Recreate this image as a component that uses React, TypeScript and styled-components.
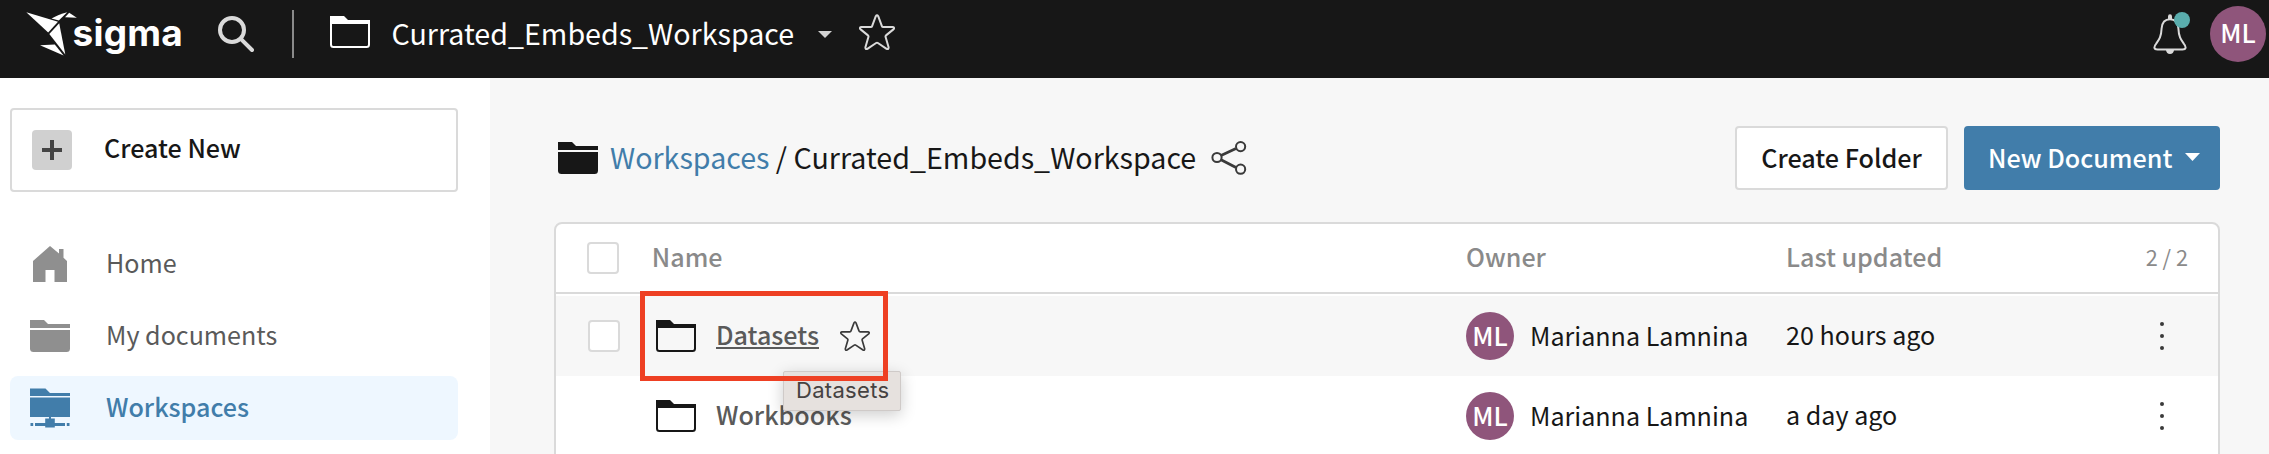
import React from 'react';
import styled, { createGlobalStyle } from 'styled-components';

const font = '"Noto Sans CJK SC", "Source Sans Pro", sans-serif';

const GlobalStyle = createGlobalStyle`
  * { box-sizing: border-box; }
  body { margin: 0; overflow: hidden; background: #fff; font-family: ${font}; color: #171717; }
  svg { display: block; flex: none; }
`;

const Page = styled.div`
  display: flex;
  flex-direction: column;
  height: 454px;
  overflow: hidden;
`;

/* ---------- top bar ---------- */

const TopBar = styled.header`
  flex: none;
  display: flex;
  align-items: center;
  height: 78px;
  padding: 0 3px 10px 26px;
  background: #171717;
  color: #fff;
`;

const Brand = styled.div`
  display: flex;
  align-items: center;
  width: 192px;
`;

const BrandName = styled.span`
  margin-left: -4.5px;
  padding-bottom: 3px;
  font: 650 37px/40px Inter, sans-serif;
  letter-spacing: 0.2px;
`;

const Divider = styled.div`
  width: 2px;
  height: 48px;
  margin: 0 36px 0 38px;
  background: #8a8a8a;
`;

const Raised = styled.div`
  padding-bottom: 4px;
`;

const WorkspaceTitle = styled.div`
  width: 426.5px;
  margin-left: 21.5px;
  padding-bottom: 3px;
  font-size: 28.65px;
  line-height: 40px;
  white-space: nowrap;
`;

const StarButton = styled(Raised)`
  margin-left: 27px;
`;

const BellButton = styled.div`
  position: relative;
  margin-left: auto;
`;

const BellDot = styled.span`
  position: absolute;
  top: -2px;
  right: -3px;
  width: 16px;
  height: 16px;
  border-radius: 50%;
  background: #5aadad;
`;

const Avatar = styled.div<{ $size: number }>`
  flex: none;
  display: flex;
  align-items: center;
  justify-content: center;
  width: ${p => p.$size}px;
  height: ${p => p.$size}px;
  padding-bottom: ${p => (p.$size > 50 ? 4 : 3)}px;
  border-radius: 50%;
  background: #8f557b;
  color: #fff;
  font-size: 25.6px;
  font-weight: 500;
  line-height: 36px;
`;

const AccountAvatar = styled(Avatar)`
  margin-left: 23px;
`;

/* ---------- sidebar ---------- */

const Body = styled.div`
  flex: 1;
  display: flex;
  min-height: 0;
`;

const Sidebar = styled.nav`
  flex: none;
  display: flex;
  flex-direction: column;
  gap: 8px;
  width: 490px;
  padding: 30px 32px 0 10px;
  background: #fff;
`;

const CreateNew = styled.div`
  display: flex;
  align-items: center;
  height: 84px;
  margin-bottom: 32px;
  padding-left: 20px;
  border: 2px solid #dadada;
  border-radius: 4px;
`;

const PlusTile = styled.div`
  display: flex;
  align-items: center;
  justify-content: center;
  width: 40px;
  height: 40px;
  border-radius: 4px;
  background: #d0d0d0;
`;

const CreateLabel = styled.span`
  margin-left: 32px;
  padding-bottom: 6px;
  font-size: 25.1px;
  font-weight: 500;
  line-height: 36px;
`;

const NavItem = styled.div<{ $active?: boolean }>`
  display: flex;
  align-items: center;
  height: 64px;
  padding-left: 20px;
  border-radius: 8px;
  background: ${p => (p.$active ? '#eef7ff' : 'transparent')};
  color: ${p => (p.$active ? '#417daa' : '#5a5a5a')};
  font-weight: ${p => (p.$active ? 500 : 400)};
`;

const NavLabel = styled.span`
  margin-left: 36px;
  padding-bottom: 4px;
  font-size: 25.1px;
  line-height: 36px;
`;

/* ---------- main panel ---------- */

const Main = styled.main`
  flex: 1;
  display: flex;
  flex-direction: column;
  min-width: 0;
  padding: 48px 49px 0 64px;
  background: #f7f7f7;
`;

const Toolbar = styled.div`
  flex: none;
  display: flex;
  align-items: center;
  height: 64px;
  margin-bottom: 32px;
  padding-left: 4px;
`;

const Breadcrumb = styled.div`
  width: 600.5px;
  margin-left: 12px;
  padding-bottom: 3px;
  font-size: 28.65px;
  line-height: 40px;
  white-space: pre;
`;

const CrumbLink = styled.span`
  color: #417daa;
`;

const ToolbarActions = styled.div`
  display: flex;
  gap: 16px;
  margin-left: auto;
`;

const Button = styled.button<{ $primary?: boolean }>`
  display: flex;
  align-items: center;
  justify-content: ${p => (p.$primary ? 'flex-start' : 'center')};
  gap: 13px;
  width: ${p => (p.$primary ? 256 : 213)}px;
  height: 64px;
  padding: 0 0 2px ${p => (p.$primary ? 22 : 0)}px;
  border: 2px solid ${p => (p.$primary ? '#417daa' : '#dadada')};
  border-radius: 4px;
  background: ${p => (p.$primary ? '#417daa' : '#fff')};
  color: ${p => (p.$primary ? '#fff' : '#171717')};
  font: 500 25.15px/36px ${font};
  white-space: nowrap;
`;

const Table = styled.section`
  flex: none;
  height: 260px;
  border: 2px solid #dadada;
  border-radius: 8px 8px 0 0;
  background: #fff;
`;

const Row = styled.div<{ $hovered?: boolean }>`
  display: grid;
  grid-template-columns: 95px 815px 320px 1fr auto;
  align-items: center;
  height: 80px;
  background: ${p => (p.$hovered ? '#f7f7f7' : 'transparent')};
  font-size: 25.1px;
  line-height: 36px;
`;

const HeadRow = styled(Row)`
  height: 70px;
  margin-bottom: 2px;
  border-bottom: 2px solid #dadada;
  color: #8a8a8a;
  font-weight: 500;
`;

const CheckCell = styled.div<{ $inset: number }>`
  padding-left: ${p => p.$inset}px;
`;

const Checkbox = styled.div`
  width: 32px;
  height: 32px;
  border: 2px solid #dadada;
  border-radius: 4px;
  background: #fff;
`;

const TextCell = styled.div`
  padding-bottom: 4px;
`;

const NameHeading = styled(TextCell)`
  padding-left: 0.8px;
`;

const Count = styled(TextCell)`
  grid-column: 5;
  padding-right: 30px;
  padding-bottom: 2px;
  font-size: 21.7px;
  font-weight: 400;
`;

const NameCell = styled.div`
  position: relative;
  display: flex;
  align-items: center;
  height: 80px;
  padding-left: 5px;
`;

const ItemName = styled.span<{ $underlined?: boolean }>`
  margin: 0 21px 4px 20px;
  color: #5a5a5a;
  font-size: 25.1px;
  font-weight: 500;
  text-decoration: ${p => (p.$underlined ? 'underline' : 'none')};
  text-decoration-thickness: 2px;
  text-underline-offset: 2px;
  text-decoration-skip-ink: none;
`;

const Highlight = styled.div`
  position: absolute;
  z-index: 3;
  top: -4.6px;
  left: -11.3px;
  width: 248.5px;
  height: 90px;
  border: 5px solid #ee4023;
`;

const Tooltip = styled.div`
  position: absolute;
  z-index: 2;
  top: 75px;
  left: 132px;
  width: 118px;
  height: 40px;
  padding-left: 12px;
  border: 1px solid #cfcac8;
  border-radius: 2px;
  background: #e6e1de;
  box-shadow: 0 4px 16px rgba(0, 0, 0, 0.2);
  color: #454241;
  font: 400 22px/36px Inter, sans-serif;
  letter-spacing: 0.3px;
`;

const OwnerCell = styled.div`
  display: flex;
  align-items: center;
  gap: 16px;
`;

const OwnerName = styled.span`
  padding-bottom: 2px;
`;

const MenuCell = styled.div`
  grid-column: 5;
  padding-right: 54px;
`;

/* ---------- icons ---------- */

const Hummingbird = () => (
  <svg width="51" height="44" viewBox="26 12 51 44" fill="#fff">
    <path d="M26.3 12.3 58 21.7 48.2 32.4Z" />
    <path d="M51.5 18.4C56 16 61 13.4 67.2 12.2L58.8 20.6Z" />
    <path d="M69.2 12.8 76.8 17.8 65 17.2Z" />
    <path d="M59.2 23.2 65.3 54.4 49.3 34Z" />
    <path d="M40 45.2 54.8 44.6 63.6 55.4Z" />
  </svg>
);

const SearchIcon = () => (
  <svg width="36" height="37" viewBox="0 0 36 37" fill="none" stroke="#dadada" strokeWidth="4">
    <circle cx="14" cy="14" r="12" />
    <path d="M22.8 22.8 34 34" strokeLinecap="round" />
  </svg>
);

const FolderOutline = ({ color }: { color: string }) => (
  <svg width="40" height="32" viewBox="0 0 40 32">
    <path d="M0 0H14L18 4H40V8H0Z" fill={color} />
    <path d="M1 6V28.5Q1 31 3.5 31H36.5Q39 31 39 28.5V6" fill="none" stroke={color} strokeWidth="2" />
  </svg>
);

const FolderSolid = ({ color }: { color: string }) => (
  <svg width="40" height="32" viewBox="0 0 40 32" fill={color}>
    <path d="M0 0H14L18 4H40V8H0Z" />
    <path d="M0 10H40V28.5Q40 32 36.5 32H3.5Q0 32 0 28.5Z" />
  </svg>
);

const HomeIcon = () => (
  <svg width="34" height="36" viewBox="0 0 34 36" fill="#8f8f8f">
    <path d="M0 15 17 0 26 7.6V3H30.5V11.8L34 15V36H21.5V24H12.5V36H0Z" />
  </svg>
);

const SharedFolderIcon = () => (
  <svg width="40" height="40" viewBox="0 0 40 40" fill="#417daa">
    <path d="M0 .5H15.5L20 5H40V8H0ZM0 9.5H40V29H21V30.5H24.8V35H35V38H24.8V39.5H15.2V38H5V35H15.2V30.5H19V29H0ZM.5 35H3.2V38H.5ZM36.8 35H39.5V38H36.8Z" />
  </svg>
);

const StarIcon = ({ size, color, stroke }: { size: number; color: string; stroke: number }) => (
  <svg width={size} height={size} viewBox="0 0 36 36" fill="none" stroke={color} strokeWidth={stroke} strokeLinejoin="round">
    <path d="M16.8 2.2Q18 .2 19.2 2.2L22.9 12.1Q23.2 13 24.2 13L33.8 13.1Q36 13.6 34.4 15.4L27 21.4Q26.3 22 26.6 23L29.6 33.3Q29.7 35.7 27.6 34.8L18.9 29Q18 28.4 17.1 29L8.4 34.8Q6.3 35.7 6.4 33.3L9.4 23Q9.7 22 9 21.4L1.6 15.4Q0 13.6 2.2 13.1L11.8 13Q12.8 13 13.1 12.1Z" />
  </svg>
);

const Caret = ({ width, height, color }: { width: number; height: number; color: string }) => (
  <svg width={width} height={height} viewBox="0 0 14 7" preserveAspectRatio="none" fill={color}>
    <path d="M0 0H14L7 7Z" />
  </svg>
);

const BellIcon = () => (
  <svg width="34" height="40" viewBox="0 1 34 40">
    <path
      d="M17 6.3C11.5 6.3 9 10.5 8.6 15.5C8.2 24 6 26.6 3.2 30.6C.2 34.6 1.2 36.5 4.5 36.5H29.5C32.8 36.5 33.8 34.6 30.8 30.6C28 26.6 25.8 24 25.4 15.5C25 10.5 22.5 6.3 17 6.3Z"
      fill="none"
      stroke="#dadada"
      strokeWidth="2"
    />
    <path d="M15 6V3.5Q15 1.2 17 1.2T19 3.5V6ZM13 37H21Q20.5 41 17 41T13 37Z" fill="#dadada" />
  </svg>
);

const ShareIcon = () => (
  <svg width="36" height="34" viewBox="0 0 36 34" fill="none" stroke="#3a3a3a">
    <path d="M10 14.5 25 7.6M10 18.8 25 26.6" strokeWidth="2.8" />
    <circle cx="6" cy="16.5" r="4.6" strokeWidth="2" />
    <circle cx="29.6" cy="5.6" r="4.6" strokeWidth="2" />
    <circle cx="29.6" cy="28.2" r="4.6" strokeWidth="2" />
  </svg>
);

const PlusIcon = () => (
  <svg width="20" height="20" viewBox="0 0 20 20" fill="#444">
    <path d="M8 0H12V8H20V12H12V20H8V12H0V8H8Z" />
  </svg>
);

const KebabIcon = () => (
  <svg width="4" height="28" viewBox="0 0 4 28" fill="#3a3a3a">
    <circle cx="2" cy="2" r="2" />
    <circle cx="2" cy="14" r="2" />
    <circle cx="2" cy="26" r="2" />
  </svg>
);

const HomeSlot = styled.div`
  display: flex;
  justify-content: center;
  width: 40px;
`;

/* ---------- content ---------- */

const items = [
  { name: 'Datasets', owner: 'Marianna Lamnina', initials: 'ML', updated: '20 hours ago', hovered: true },
  { name: 'Workbooks', owner: 'Marianna Lamnina', initials: 'ML', updated: 'a day ago', hovered: false },
];

export default function App() {
  return (
    <Page>
      <GlobalStyle />
      <TopBar>
        <Brand>
          <Hummingbird />
          <BrandName>sigma</BrandName>
        </Brand>
        <SearchIcon />
        <Divider />
        <Raised>
          <FolderOutline color="#fff" />
        </Raised>
        <WorkspaceTitle>Currated_Embeds_Workspace</WorkspaceTitle>
        <Caret width={14} height={7} color="#d2d2d2" />
        <StarButton>
          <StarIcon size={36} color="#dadada" stroke={2} />
        </StarButton>
        <BellButton>
          <BellIcon />
          <BellDot />
        </BellButton>
        <AccountAvatar $size={56}>ML</AccountAvatar>
      </TopBar>
      <Body>
        <Sidebar>
          <CreateNew>
            <PlusTile>
              <PlusIcon />
            </PlusTile>
            <CreateLabel>Create New</CreateLabel>
          </CreateNew>
          <NavItem>
            <HomeSlot>
              <HomeIcon />
            </HomeSlot>
            <NavLabel>Home</NavLabel>
          </NavItem>
          <NavItem>
            <FolderSolid color="#8f8f8f" />
            <NavLabel>My documents</NavLabel>
          </NavItem>
          <NavItem $active>
            <SharedFolderIcon />
            <NavLabel>Workspaces</NavLabel>
          </NavItem>
        </Sidebar>
        <Main>
          <Toolbar>
            <FolderSolid color="#171717" />
            <Breadcrumb>
              <CrumbLink>Workspaces</CrumbLink> / Currated_Embeds_Workspace
            </Breadcrumb>
            <ShareIcon />
            <ToolbarActions>
              <Button>Create Folder</Button>
              <Button $primary>
                New Document
                <Caret width={15} height={8} color="#fff" />
              </Button>
            </ToolbarActions>
          </Toolbar>
          <Table>
            <HeadRow>
              <CheckCell $inset={31}>
                <Checkbox />
              </CheckCell>
              <NameHeading>Name</NameHeading>
              <TextCell>Owner</TextCell>
              <TextCell>Last updated</TextCell>
              <Count>2 / 2</Count>
            </HeadRow>
            {items.map(item => (
              <Row key={item.name} $hovered={item.hovered}>
                <CheckCell $inset={32}>{item.hovered && <Checkbox />}</CheckCell>
                <NameCell>
                  <FolderOutline color="#171717" />
                  <ItemName $underlined={item.hovered}>{item.name}</ItemName>
                  {item.hovered && (
                    <>
                      <StarIcon size={30} color="#3a3a3a" stroke={2} />
                      <Tooltip>{item.name}</Tooltip>
                      <Highlight />
                    </>
                  )}
                </NameCell>
                <OwnerCell>
                  <Avatar $size={48}>{item.initials}</Avatar>
                  <OwnerName>{item.owner}</OwnerName>
                </OwnerCell>
                <TextCell>{item.updated}</TextCell>
                <MenuCell>
                  <KebabIcon />
                </MenuCell>
              </Row>
            ))}
          </Table>
        </Main>
      </Body>
    </Page>
  );
}
